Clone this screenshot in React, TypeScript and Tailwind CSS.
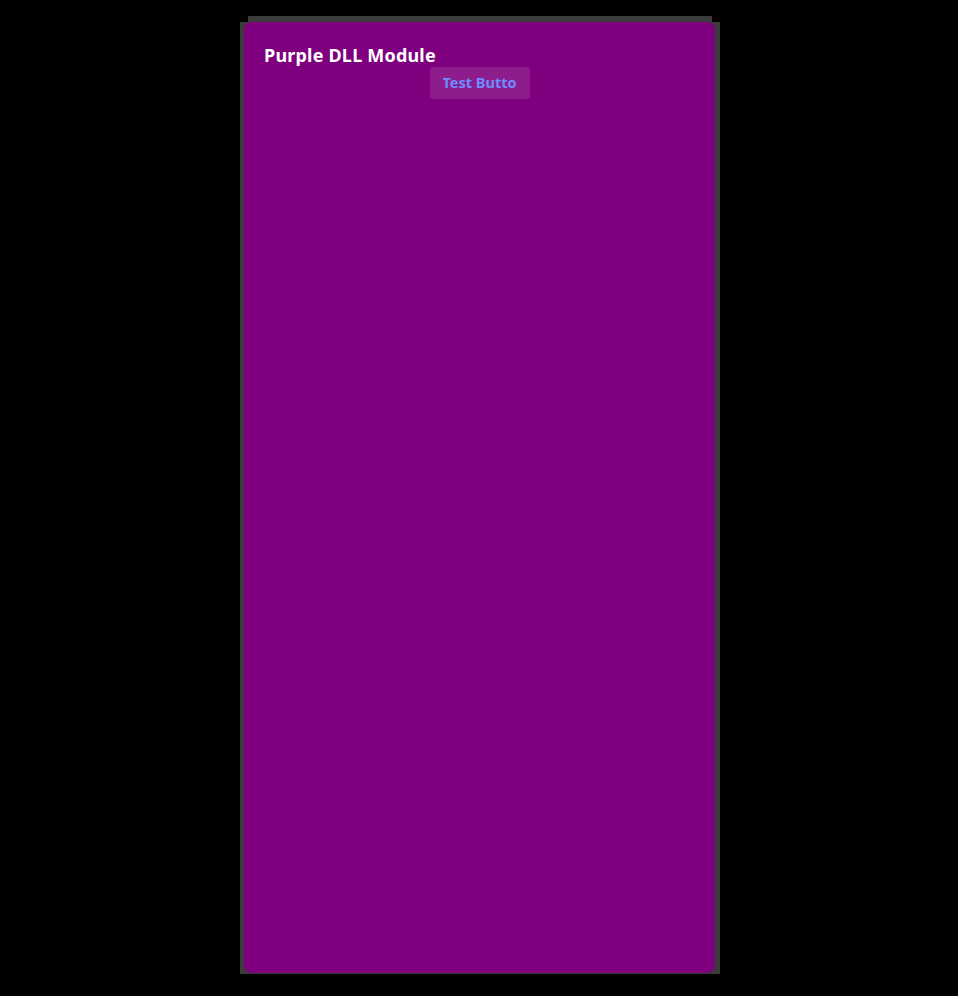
export default function App() {
  return (
    <div className="min-h-[996px] bg-black pt-4" style={{ fontFamily: '"Noto Sans", "Open Sans", sans-serif' }}>
      <div className="w-[480px] ml-[240px]">
        <div className="h-2 mx-2 bg-[#3b3b3b]" />
        <div className="h-[952px] bg-[#3b3b3b] pb-[3px]">
          <div className="-mt-[2px] ml-1 mr-[5px] h-[951px] rounded-lg bg-[#7e007e] px-5 pt-[21px]">
            <h1 className="text-[18px] leading-6 font-bold text-white tracking-[0.2px]">Purple DLL Module</h1>
            <div className="flex justify-center">
              <button className="w-[100px] h-8 rounded-[3px] bg-[#8d1d8d] px-[13px] text-left">
                <span className="block w-[74px] overflow-hidden whitespace-nowrap text-[14.5px] font-bold text-[#6c8cff]">
                  Test Button
                </span>
              </button>
            </div>
          </div>
        </div>
      </div>
    </div>
  );
}
